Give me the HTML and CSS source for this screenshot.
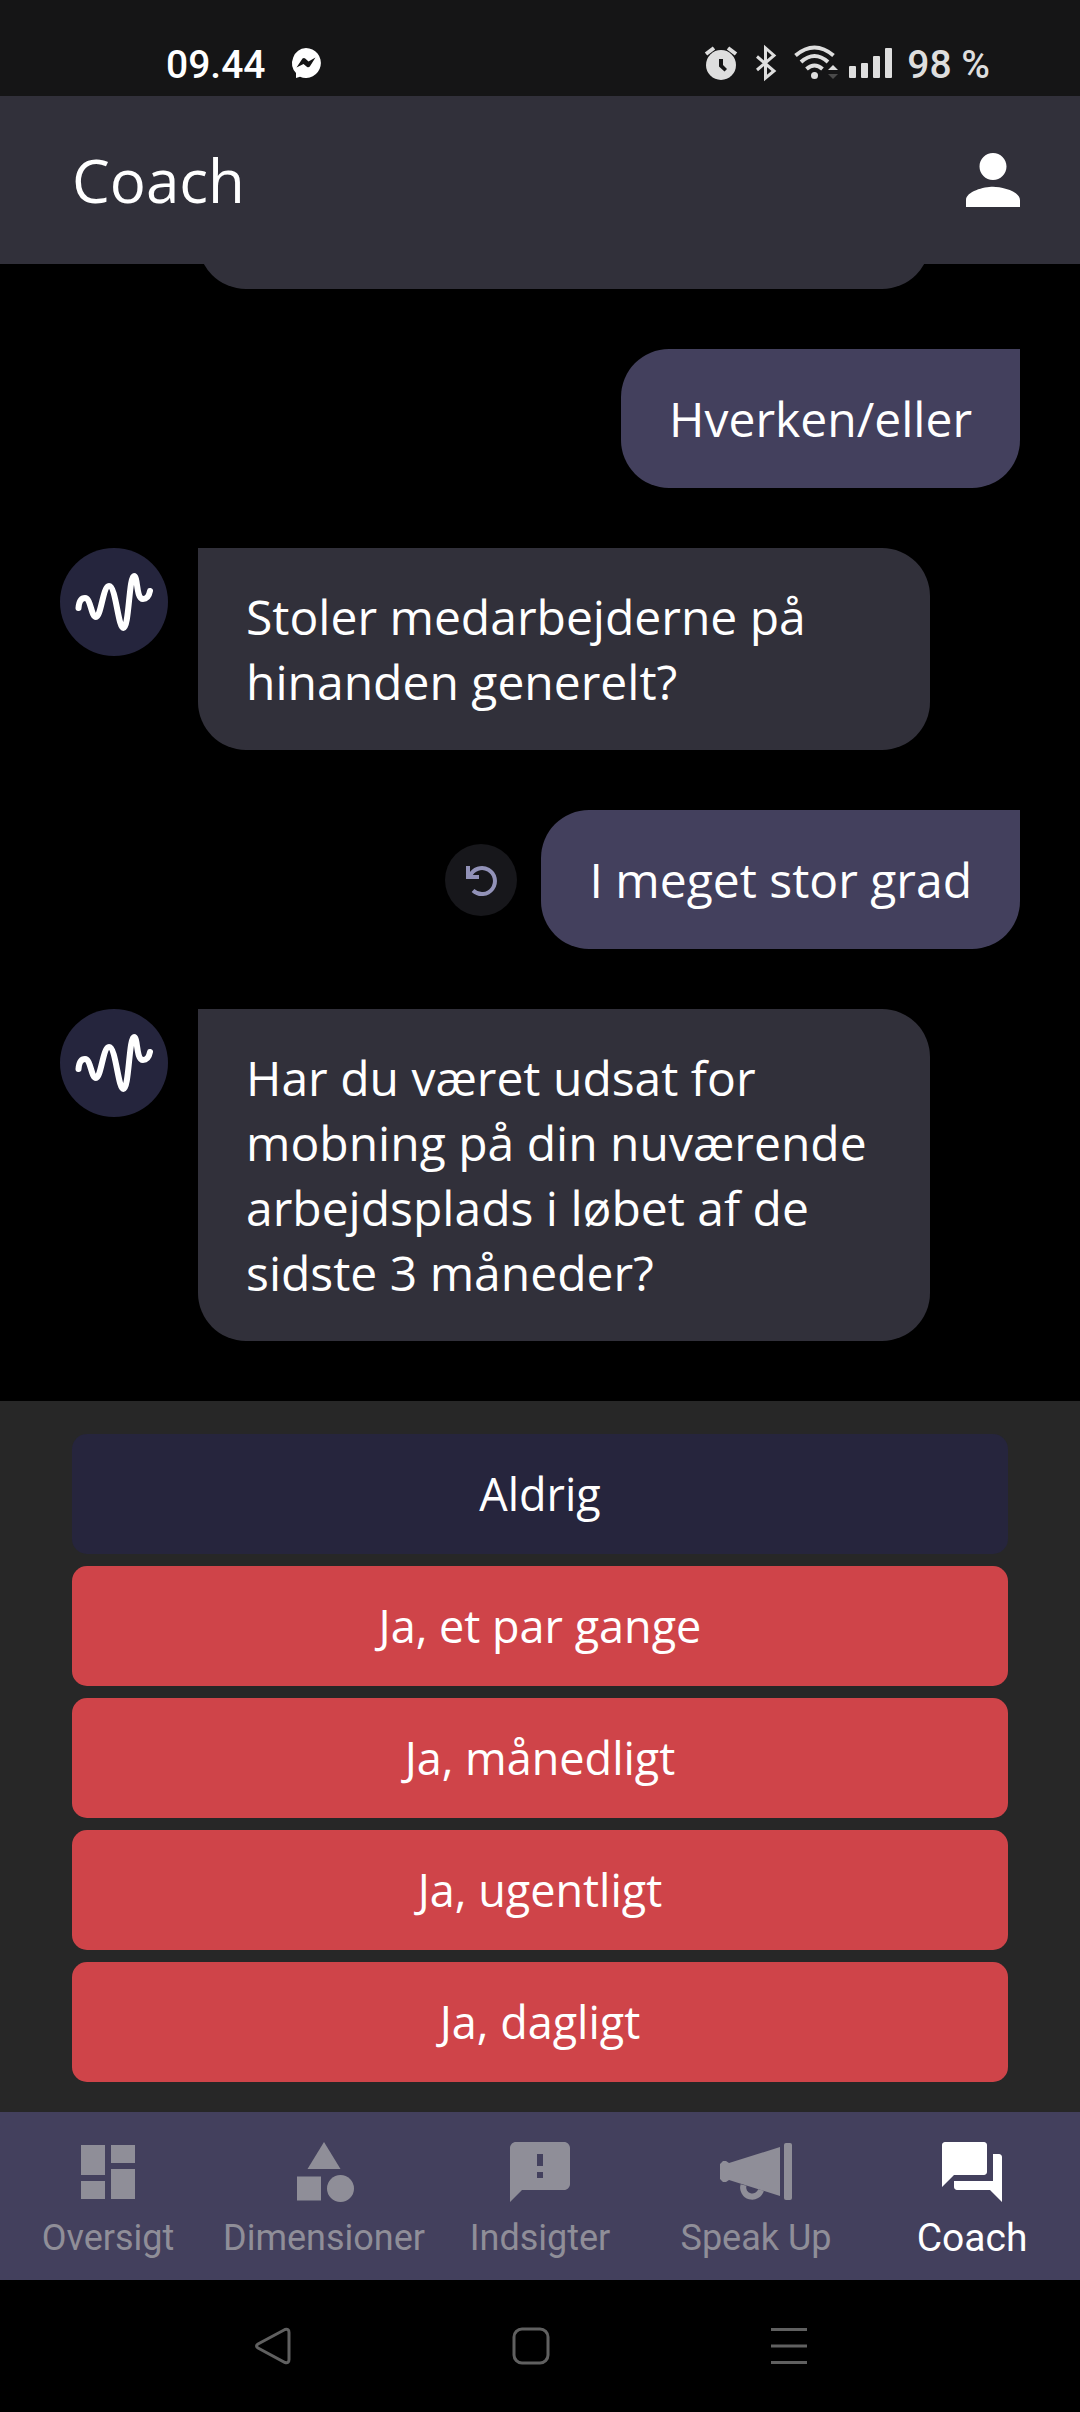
FILE: index.html
```html
<!DOCTYPE html>
<html lang="da">
<head>
<meta charset="utf-8">
<meta name="viewport" content="width=device-width, initial-scale=1">
<title>Coach</title>
<link rel="stylesheet" href="styles.css">
</head>
<body>
<div class="status">
  <div class="status-group status-left">
    <span>09.44</span>
    <svg width="32" height="32" viewBox="0 2 32 32"><path d="M16 1a15 15 0 1 1-6 28.800l-4 1.200v-5A15 15 0 0 1 16 1z" fill="#fff"/><path d="M6.500 20.500L12.500 11.500Q14 10.500 15.500 11.700L18.500 14.500 25.500 10.500 19.800 19.500Q18.500 21 16.800 19.700L13.500 17z" fill="#151516"/></svg>
  </div>
  <div class="status-group status-right">
    <svg class="alarm" width="34" height="36" viewBox="0 1 34 36"><circle cx="17" cy="19" r="15"/><path class="line" d="M2 8l8-6M32 8l-8-6"/><path d="M15 13h4v6l4 4-2.500 2.500-5.500-5z" fill="#151516"/></svg>
    <svg class="bluetooth" width="22" height="36" viewBox="0 1 22 36"><path class="line thin" d="M2 10.500L19 25L10.500 32V2L19 9.500L2 24"/></svg>
    <svg class="wifi" width="46" height="36" viewBox="0 1 46 36"><path class="line" d="M1.500 9.500q19-16 38 0M7 16q13.500-12 27 0M12.500 23q8-7 16 0"/><circle cx="20.500" cy="29.500" r="3.500"/><path d="M34 24l5-5 5 5z"/><path d="M34 28h10l-5 5z" fill="#4a4a4a"/></svg>
    <svg class="bars" width="44" height="32" viewBox="0 1 44 32"><rect x="0" y="18" width="7" height="12" rx="1"/><rect x="12" y="15" width="7" height="15" rx="1"/><rect x="24" y="8" width="7" height="22" rx="1"/><rect x="36" y="0" width="7" height="30" rx="1"/></svg>
    <span>98 %</span>
  </div>
</div>

<header class="app-bar">
  <h1>Coach</h1>
  <button class="icon-button" type="button" aria-label="Profil">
    <svg width="54" height="54" viewBox="4 4 16 16" fill="#fff"><path d="M12 12c2.210 0 4-1.790 4-4s-1.790-4-4-4-4 1.790-4 4 1.790 4 4 4zm0 2c-2.670 0-8 1.340-8 4v2h16v-2c0-2.660-5.330-4-8-4z"/></svg>
  </button>
</header>

<main class="chat">
  <div class="row bot"><div class="avatar-space"></div><div class="bubble earlier"></div></div>
  <div class="row user"><p class="bubble">Hverken/eller</p></div>
  <div class="row bot">
    <div class="avatar"><svg width="108" height="108" viewBox="0 0 108 108"><path d="M18.500 60C19 54 21 50 25 50C31 50 31 69 36 69C41 69 43 38 49 38C56 38 58 80 63.500 80C69 80 69 28 74 28C78 28 76 51 83 51C87 51 89 48 90 43"/></svg></div>
    <p class="bubble">Stoler medarbejderne på hinanden generelt?</p>
  </div>
  <div class="row user">
    <button class="undo" type="button" aria-label="Fortryd"><svg width="36" height="36" viewBox="0 0 36 36"><path d="M7 14A13 13 0 1 1 10 28.500" fill="none" stroke="#9292b8" stroke-width="4"/><path d="M3 4h4v6l3 3h6v4H3z" fill="#9292b8"/></svg></button>
    <p class="bubble">I meget stor grad</p>
  </div>
  <div class="row bot">
    <div class="avatar"><svg width="108" height="108" viewBox="0 0 108 108"><path d="M18.500 60C19 54 21 50 25 50C31 50 31 69 36 69C41 69 43 38 49 38C56 38 58 80 63.500 80C69 80 69 28 74 28C78 28 76 51 83 51C87 51 89 48 90 43"/></svg></div>
    <p class="bubble">Har du været udsat for mobning på din nuværende arbejdsplads i løbet af de sidste 3 måneder?</p>
  </div>
</main>

<section class="answers" aria-label="Svarmuligheder">
  <button class="answer calm" type="button">Aldrig</button>
  <button class="answer" type="button">Ja, et par gange</button>
  <button class="answer" type="button">Ja, månedligt</button>
  <button class="answer" type="button">Ja, ugentligt</button>
  <button class="answer" type="button">Ja, dagligt</button>
</section>

<nav class="tabs">
  <a href="#oversigt"><svg width="72" height="72" viewBox="0 0 24 24"><path d="M3 13h8V3H3v10zm0 8h8v-6H3v6zm10 0h8V11h-8v10zm0-18v6h8V3h-8z"/></svg><span>Oversigt</span></a>
  <a href="#dimensioner"><svg width="72" height="72" viewBox="0 0 24 24"><path d="M12 2l-5.500 9h11z"/><circle cx="17.500" cy="17.500" r="4.500"/><path d="M3 13.500h8v8H3z"/></svg><span>Dimensioner</span></a>
  <a href="#indsigter"><svg width="72" height="72" viewBox="0 0 24 24"><path d="M20 2H4c-1.100 0-2 .9-2 2v18l4-4h14c1.100 0 2-.9 2-2V4c0-1.100-.9-2-2-2zm-7 12h-2v-2h2v2zm0-4h-2V6h2v4z"/></svg><span>Indsigter</span></a>
  <a href="#speakup"><svg width="72" height="72" viewBox="0 0 72 72"><path d="M3 25h3l3 2L60 11v49L9 44 6 46H3l-3-3V28z"/><path d="M23.500 49a9 9 0 1 0 17.500 5" fill="none" stroke="#8f8e98" stroke-width="6"/><rect x="64" y="7" width="8" height="57" rx="2"/></svg><span>Speak Up</span></a>
  <a class="active" href="#coach" aria-current="page"><svg width="72" height="72" viewBox="0 0 24 24"><path d="M21 6h-2v9H6v2c0 .55.45 1 1 1h11l4 4V7c0-.55-.45-1-1-1zm-4 6V3c0-.55-.45-1-1-1H3c-.55 0-1 .45-1 1v14l4-4h10c.55 0 1-.45 1-1z"/></svg><span>Coach</span></a>
</nav>

<div class="system">
  <button type="button" aria-label="Tilbage"><svg width="40" height="40" viewBox="0 0 40 40"><path d="M32 3.500L5 18q-3 2 0 4l27 14.500q4 1 4-3v-27q0-4-4-3z"/></svg></button>
  <button type="button" aria-label="Hjem"><svg width="40" height="40" viewBox="0 0 40 40"><rect x="3" y="3" width="34" height="34" rx="8"/></svg></button>
  <button type="button" aria-label="Seneste"><svg width="40" height="40" viewBox="0 0 40 40"><path d="M2 3.500h36M2 20h36M2 36.500h36"/></svg></button>
</div>
</body>
</html>
```
FILE: styles.css
```css
* { box-sizing: border-box; }

body {
  margin: 0;
  height: 100vh;
  display: flex;
  flex-direction: column;
  background: #000;
  color: #fff;
  font-family: "Open Sans", "Noto Sans", sans-serif;
}

h1, p { margin: 0; font-weight: 400; }
svg { display: block; flex: none; overflow: visible; }
button { margin: 0; padding: 0; border: 0; background: none; color: inherit; font: inherit; }

.status {
  flex: none;
  display: flex;
  justify-content: space-between;
  height: 96px;
  padding: 33px 90px 0 166px;
  background: #151516;
  font: 500 39px/64px Roboto, sans-serif;
}
.status-group { display: flex; align-items: center; height: 64px; }
.status-left { gap: 24px; }
.status-right { color: #dedede; fill: #dedede; }
.status .line { fill: none; stroke: #dedede; stroke-width: 4; }
.status .thin { stroke-width: 3; }
.alarm, .bluetooth { margin-right: 17px; }
.wifi { margin-right: 9px; }
.bars { margin-right: 14px; }

.app-bar {
  flex: none;
  display: flex;
  align-items: center;
  justify-content: space-between;
  height: 168px;
  padding: 0 60px 0 72px;
  background: #31303a;
}
.app-bar h1 { font-size: 60px; line-height: 80px; }

.chat {
  flex: 1;
  min-height: 0;
  overflow: hidden;
  display: flex;
  flex-direction: column;
  justify-content: flex-end;
  gap: 60px;
  padding: 0 60px 60px;
}
.row { display: flex; flex: none; }
.user { justify-content: flex-end; align-items: center; gap: 24px; }
.bot { gap: 30px; padding-right: 90px; }
.bubble { font-size: 48px; line-height: 65px; }
.bot .bubble {
  flex: 1;
  padding: 36px 48px;
  border-radius: 0 48px 48px 48px;
  background: #31303a;
}
.user .bubble {
  padding: 37px 48px;
  border-radius: 48px 0 48px 48px;
  background: #43405d;
}
.bot .earlier { min-height: 202px; }
.avatar, .avatar-space { flex: none; width: 108px; height: 108px; }
.avatar { border-radius: 50%; background: #25253d; }
.avatar path { fill: none; stroke: #fff; stroke-width: 6; stroke-linecap: round; stroke-linejoin: round; }
.undo {
  display: flex;
  align-items: center;
  justify-content: center;
  width: 72px;
  height: 72px;
  border-radius: 50%;
  background: #17171b;
}

.answers {
  flex: none;
  display: flex;
  flex-direction: column;
  gap: 12px;
  padding: 33px 72px 30px;
  background: #272727;
}
.answer {
  height: 120px;
  border-radius: 15px;
  background: #cf4449;
  font-size: 45px;
  line-height: 60px;
}
.calm { background: #26253d; }

.tabs {
  flex: none;
  display: grid;
  grid-template-columns: repeat(5, 1fr);
  height: 168px;
  background: #43405d;
  font: 36px/48px Roboto, sans-serif;
}
.tabs a {
  display: flex;
  flex-direction: column;
  align-items: center;
  padding-top: 24px;
  gap: 6px;
  color: #8f8e98;
  fill: #8f8e98;
  text-decoration: none;
}
.tabs .active { color: #fff; fill: #fff; font-size: 39px; }

.system {
  flex: none;
  display: flex;
  align-items: center;
  justify-content: center;
  gap: 218px;
  height: 132px;
  padding-right: 18px;
}
.system svg { fill: none; stroke: #606060; stroke-width: 3; }
```
